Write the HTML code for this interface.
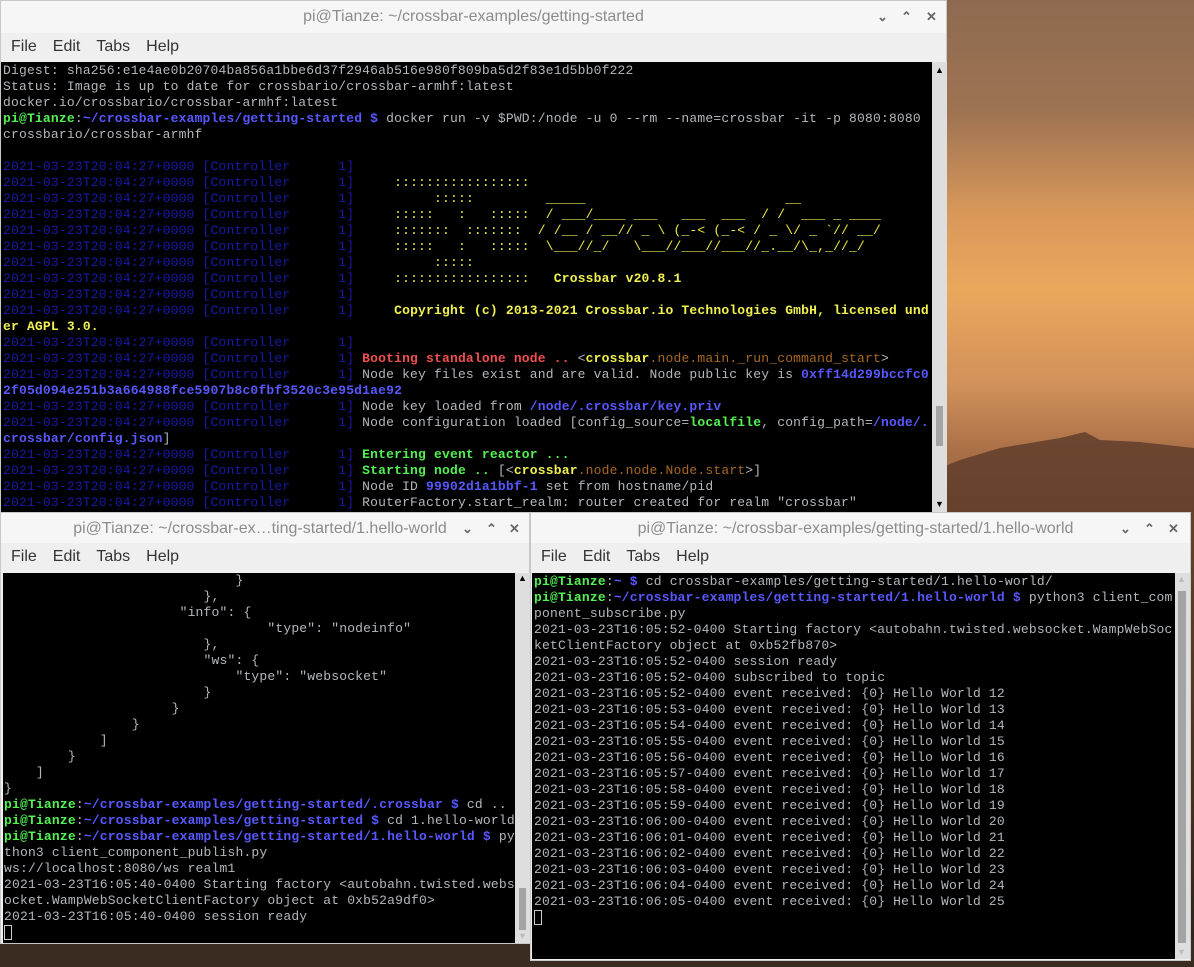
<!DOCTYPE html>
<html><head><meta charset="utf-8"><style>
*{margin:0;padding:0;box-sizing:border-box}
body{width:1194px;height:967px;overflow:hidden;position:relative;font-family:"Liberation Sans",sans-serif;background:#000}
.bg{position:absolute;left:0;top:0}
.win{position:absolute;background:#f0f0f0;border:1px solid #c8c8c8}
.title{position:absolute;left:0;right:0;top:0;height:32px;background:#f6f6f6;color:#8c8c8c;font-size:16px;text-align:center;line-height:32px}
.btns{position:absolute;top:0;height:32px;font-size:13px;color:#666}
.btns span{position:absolute;top:8px;font-weight:bold}
.menu{position:absolute;left:0;right:0;top:32px;height:28px;background:#efefef;font-size:16px;color:#333;line-height:28px}
.menu span{margin-left:10px;margin-right:6px}
.term{position:absolute;background:#000;overflow:hidden}
pre{font-family:"Liberation Mono",monospace;font-size:13px;letter-spacing:0.18px;line-height:16px;color:#b4b8bc;white-space:pre;padding-left:3px}
.g{color:#54f054;font-weight:bold}.b{color:#5858ff;font-weight:bold}.d{color:#1a1aa8}
.y{color:#f0f050;font-weight:bold}.ya{color:#f0e848}.r{color:#f05050;font-weight:bold}.o{color:#a86820}
.sb{position:absolute;background:#dedede}
.th{position:absolute;background:#a4a4a4}
.cur{display:inline-block;width:8px;height:15px;border:1px solid #ccc;vertical-align:-3px}
</style></head><body>
<svg class="bg" width="1194" height="967" viewBox="0 0 1194 967">
<defs><linearGradient id="sky" x1="0" y1="0" x2="0" y2="1">
<stop offset="0" stop-color="#8c6a50"/><stop offset="0.12" stop-color="#a07452"/><stop offset="0.22" stop-color="#d8985a"/><stop offset="0.3" stop-color="#eaa85c"/><stop offset="0.4" stop-color="#d0905a"/><stop offset="0.47" stop-color="#a86e46"/><stop offset="1" stop-color="#6a4a34"/></linearGradient>
<linearGradient id="mt" x1="0" y1="0" x2="0" y2="1"><stop offset="0" stop-color="#6e4630"/><stop offset="0.5" stop-color="#503624"/><stop offset="1" stop-color="#2e2218"/></linearGradient></defs>
<rect width="1194" height="967" fill="url(#sky)"/>
<path d="M940 468 L960 460 L1000 448 L1060 438 L1085 432 L1100 440 L1140 442 L1194 448 L1194 967 L940 967 Z" fill="url(#mt)"/>
<rect x="0" y="940" width="1194" height="27" fill="#3a2c20"/>
</svg>

<!-- Top window -->
<div class="win" style="left:0;top:0;width:947px;height:513px">
<div class="title">pi@Tianze: ~/crossbar-examples/getting-started</div>
<div class="btns" style="left:0;width:946px"><span style="left:876px">&#8964;</span><span style="left:900px">&#8963;</span><span style="left:925px">&#10005;</span></div>
<div class="menu"><span>File</span><span>Edit</span><span>Tabs</span><span>Help</span></div>
<div class="term" style="left:0;top:61px;width:931px;height:450px"><pre style="padding-top:1px;padding-left:2px">Digest: sha256:e1e4ae0b20704ba856a1bbe6d37f2946ab516e980f809ba5d2f83e1d5bb0f222
Status: Image is up to date for crossbario/crossbar-armhf:latest
docker.io/crossbario/crossbar-armhf:latest
<span class="g">pi@Tianze</span>:<span class="b">~/crossbar-examples/getting-started $</span> docker run -v $PWD:/node -u 0 --rm --name=crossbar -it -p 8080:8080
crossbario/crossbar-armhf

<span class="d">2021-03-23T20:04:27+0000 [Controller      1]</span>
<span class="d">2021-03-23T20:04:27+0000 [Controller      1]</span>     <span class="ya">:::::::::::::::::</span>
<span class="d">2021-03-23T20:04:27+0000 [Controller      1]</span>          <span class="ya">:::::         _____                         __</span>
<span class="d">2021-03-23T20:04:27+0000 [Controller      1]</span>     <span class="ya">:::::   :   :::::  / ___/____ ___   ___  ___  / /  ___ _ ____</span>
<span class="d">2021-03-23T20:04:27+0000 [Controller      1]</span>     <span class="ya">:::::::  :::::::  / /__ / __// _ \ (_-&lt; (_-&lt; / _ \/ _ `// __/</span>
<span class="d">2021-03-23T20:04:27+0000 [Controller      1]</span>     <span class="ya">:::::   :   :::::  \___//_/   \___//___//___//_.__/\_,_//_/</span>
<span class="d">2021-03-23T20:04:27+0000 [Controller      1]</span>          <span class="ya">:::::</span>
<span class="d">2021-03-23T20:04:27+0000 [Controller      1]</span>     <span class="ya">:::::::::::::::::</span>   <span class="y">Crossbar v20.8.1</span>
<span class="d">2021-03-23T20:04:27+0000 [Controller      1]</span>
<span class="d">2021-03-23T20:04:27+0000 [Controller      1]</span>     <span class="y">Copyright (c) 2013-2021 Crossbar.io Technologies GmbH, licensed und</span>
<span class="y">er AGPL 3.0.</span>
<span class="d">2021-03-23T20:04:27+0000 [Controller      1]</span>
<span class="d">2021-03-23T20:04:27+0000 [Controller      1]</span> <span class="r">Booting standalone node ..</span> &lt;<span class="y">crossbar</span><span class="o">.node.main._run_command_start</span>&gt;
<span class="d">2021-03-23T20:04:27+0000 [Controller      1]</span> Node key files exist and are valid. Node public key is <span class="b">0xff14d299bccfc0</span>
<span class="b">2f05d094e251b3a664988fce5907b8c0fbf3520c3e95d1ae92</span>
<span class="d">2021-03-23T20:04:27+0000 [Controller      1]</span> Node key loaded from <span class="b">/node/.crossbar/key.priv</span>
<span class="d">2021-03-23T20:04:27+0000 [Controller      1]</span> Node configuration loaded [config_source=<span class="g">localfile</span>, config_path=<span class="b">/node/.</span>
<span class="b">crossbar/config.json</span>]
<span class="d">2021-03-23T20:04:27+0000 [Controller      1]</span> <span class="g">Entering event reactor ...</span>
<span class="d">2021-03-23T20:04:27+0000 [Controller      1]</span> <span class="g">Starting node ..</span> [&lt;<span class="y">crossbar</span><span class="o">.node.node.Node.start</span>&gt;]
<span class="d">2021-03-23T20:04:27+0000 [Controller      1]</span> Node ID <span class="b">99902d1a1bbf-1</span> set from hostname/pid
<span class="d">2021-03-23T20:04:27+0000 [Controller      1]</span> RouterFactory.start_realm: router created for realm "crossbar"</pre></div>
<div class="sb" style="left:931px;top:61px;width:15px;height:450px"></div>
<div class="th" style="left:935px;top:405px;width:7px;height:40px"></div>
<div style="position:absolute;left:934px;top:64px;font-size:9px;color:#000">&#9650;</div>
<div style="position:absolute;left:934px;top:498px;font-size:9px;color:#000">&#9660;</div>
</div>

<!-- Bottom-left window -->
<div class="win" style="left:0;top:512px;width:530px;height:432px">
<div class="title" style="height:31px;line-height:31px;padding-right:10px">pi@Tianze: ~/crossbar-ex…ting-started/1.hello-world</div>
<div class="btns" style="left:0;width:529px"><span style="left:461px">&#8964;</span><span style="left:485px">&#8963;</span><span style="left:508px">&#10005;</span></div>
<div class="menu" style="top:30px"><span>File</span><span>Edit</span><span>Tabs</span><span>Help</span></div>
<div class="term" style="left:2px;top:60px;width:512px;height:370px"><pre style="padding-left:1px">                             }
                         },
                      "info": {
                                 "type": "nodeinfo"
                         },
                         "ws": {
                             "type": "websocket"
                         }
                     }
                }
            ]
        }
    ]
}
<span class="g">pi@Tianze</span>:<span class="b">~/crossbar-examples/getting-started/.crossbar $</span> cd ..
<span class="g">pi@Tianze</span>:<span class="b">~/crossbar-examples/getting-started $</span> cd 1.hello-world
<span class="g">pi@Tianze</span>:<span class="b">~/crossbar-examples/getting-started/1.hello-world $</span> py
thon3 client_component_publish.py
ws://localhost:8080/ws realm1
2021-03-23T16:05:40-0400 Starting factory &lt;autobahn.twisted.webs
ocket.WampWebSocketClientFactory object at 0xb52a9df0&gt;
2021-03-23T16:05:40-0400 session ready
<span class="cur"></span></pre></div>
<div class="sb" style="left:514px;top:60px;width:15px;height:370px"></div>
<div class="th" style="left:518px;top:375px;width:7px;height:42px"></div>
<div style="position:absolute;left:517px;top:60px;font-size:9px;color:#000">&#9650;</div>
<div style="position:absolute;left:517px;top:418px;font-size:9px;color:#bbb">&#9660;</div>
</div>

<!-- Bottom-right window -->
<div class="win" style="left:530px;top:512px;width:661px;height:449px">
<div class="title" style="height:31px;line-height:31px;padding-right:10px">pi@Tianze: ~/crossbar-examples/getting-started/1.hello-world</div>
<div class="btns" style="left:0;width:660px"><span style="left:589px">&#8964;</span><span style="left:613px">&#8963;</span><span style="left:637px">&#10005;</span></div>
<div class="menu" style="top:30px"><span>File</span><span>Edit</span><span>Tabs</span><span>Help</span></div>
<div class="term" style="left:1px;top:60px;width:643px;height:386px"><pre style="padding-left:2px;padding-top:1px"><span class="g">pi@Tianze</span>:<span class="b">~ $</span> cd crossbar-examples/getting-started/1.hello-world/
<span class="g">pi@Tianze</span>:<span class="b">~/crossbar-examples/getting-started/1.hello-world $</span> python3 client_com
ponent_subscribe.py
2021-03-23T16:05:52-0400 Starting factory &lt;autobahn.twisted.websocket.WampWebSoc
ketClientFactory object at 0xb52fb870&gt;
2021-03-23T16:05:52-0400 session ready
2021-03-23T16:05:52-0400 subscribed to topic
2021-03-23T16:05:52-0400 event received: {0} Hello World 12
2021-03-23T16:05:53-0400 event received: {0} Hello World 13
2021-03-23T16:05:54-0400 event received: {0} Hello World 14
2021-03-23T16:05:55-0400 event received: {0} Hello World 15
2021-03-23T16:05:56-0400 event received: {0} Hello World 16
2021-03-23T16:05:57-0400 event received: {0} Hello World 17
2021-03-23T16:05:58-0400 event received: {0} Hello World 18
2021-03-23T16:05:59-0400 event received: {0} Hello World 19
2021-03-23T16:06:00-0400 event received: {0} Hello World 20
2021-03-23T16:06:01-0400 event received: {0} Hello World 21
2021-03-23T16:06:02-0400 event received: {0} Hello World 22
2021-03-23T16:06:03-0400 event received: {0} Hello World 23
2021-03-23T16:06:04-0400 event received: {0} Hello World 24
2021-03-23T16:06:05-0400 event received: {0} Hello World 25
<span class="cur"></span></pre></div>
<div class="sb" style="left:644px;top:60px;width:15px;height:386px"></div>
<div class="th" style="left:647px;top:78px;width:8px;height:352px"></div>
<div style="position:absolute;left:646px;top:61px;font-size:9px;color:#bbb">&#9650;</div>
<div style="position:absolute;left:646px;top:434px;font-size:9px;color:#bbb">&#9660;</div>
</div>
</body></html>
